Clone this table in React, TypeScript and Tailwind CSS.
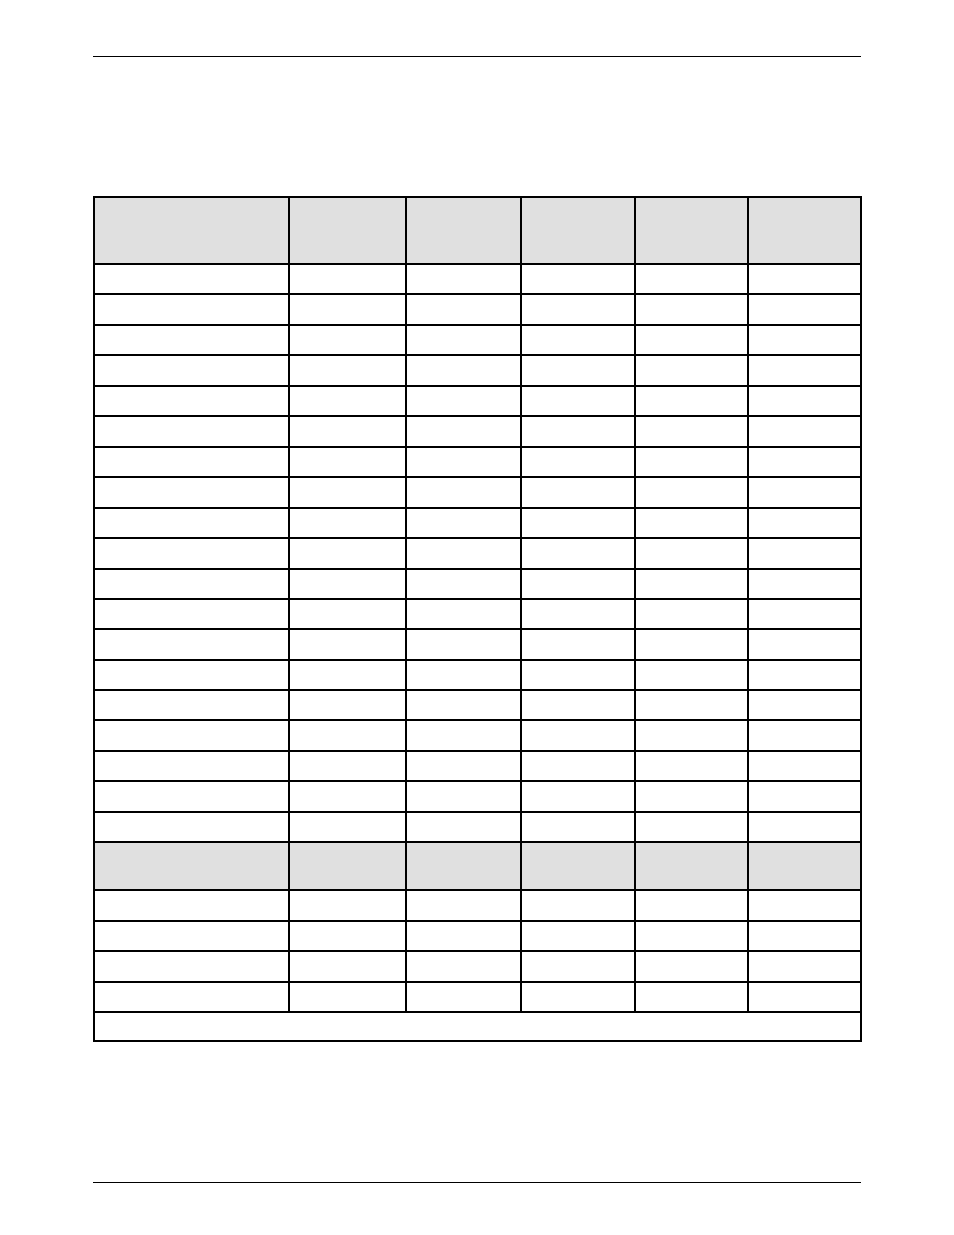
const COL_WIDTHS = ['w-[195px]', 'w-[117px]', 'w-[115px]', 'w-[114px]', 'w-[113px]', 'w-[113px]'];

const FIRST_BLOCK = [
  'h-[30px]', 'h-[31px]', 'h-[30px]', 'h-[31px]', 'h-[30px]', 'h-[31px]', 'h-[30px]',
  'h-[31px]', 'h-[30px]', 'h-[31px]', 'h-[30px]', 'h-[30px]', 'h-[31px]', 'h-[30px]',
  'h-[30px]', 'h-[31px]', 'h-[30px]', 'h-[31px]', 'h-[30px]',
];

const SECOND_BLOCK = ['h-[31px]', 'h-[30px]', 'h-[31px]', 'h-[30px]'];

function EmptyRow({ height }: { height: string }) {
  return (
    <tr className={height}>
      {COL_WIDTHS.map((_, i) => (
        <td key={i} className="border-2 border-black p-0" />
      ))}
    </tr>
  );
}

function HeaderRow({ height }: { height: string }) {
  return (
    <tr className={`${height} bg-[#e0e0e0]`}>
      {COL_WIDTHS.map((_, i) => (
        <th key={i} className="border-2 border-b border-black p-0 font-normal" />
      ))}
    </tr>
  );
}

export default function App() {
  return (
    <div className="min-h-[1235px] w-[954px] bg-white font-['Liberation_Sans',Arial,sans-serif] text-black">
      <div className="mx-[93px] pt-[56px]">
        <div className="h-[1px] bg-black" />

        <table className="mt-[139px] w-[768px] table-fixed border-collapse border-2 border-black">
          <colgroup>
            {COL_WIDTHS.map((w, i) => (
              <col key={i} className={w} />
            ))}
          </colgroup>
          <tbody>
            <HeaderRow height="h-[67px]" />
            {FIRST_BLOCK.map((h, i) => (
              <EmptyRow key={`a${i}`} height={h} />
            ))}
            <HeaderRow height="h-[48px]" />
            {SECOND_BLOCK.map((h, i) => (
              <EmptyRow key={`b${i}`} height={h} />
            ))}
            <tr className="h-[29px]">
              <td colSpan={6} className="border-2 border-black p-0" />
            </tr>
          </tbody>
        </table>

        <div className="mt-[140px] h-[1px] bg-black" />
      </div>
    </div>
  );
}
